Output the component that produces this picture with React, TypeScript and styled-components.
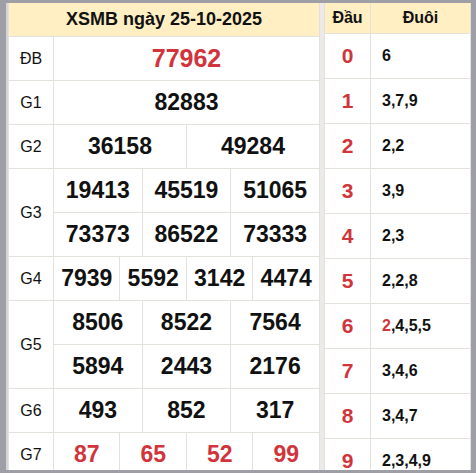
import styled, {createGlobalStyle} from 'styled-components'

const GlobalStyle = createGlobalStyle`
  html, body {
    margin: 0;
    padding: 0;
    background: #a1a1a9;
    font-family: "Liberation Sans", Arial, sans-serif;
  }
`

const RED = '#d1343a'
const LINE = '#e4e0db'
const HEAD_BG = '#ffefc3'

const Frame = styled.div`
  width: 476px;
  height: 473px;
  box-sizing: border-box;
  border-style: solid;
  border-color: #9e9ea6;
  border-width: 3px 5px 3px 6px;
  overflow: hidden;
`

const Inner = styled.div`
  display: flex;
  align-items: flex-start;
  gap: 4px;
  height: 100%;
  border-left: 2px solid #d6d6da;
  background: #ebeae8;
  overflow: hidden;
`

const Table = styled.table<{$width?: number}>`
  border-collapse: collapse;
  table-layout: fixed;
  background: #fff;
  ${({$width}) => ($width ? `width: ${$width}px;` : 'flex: 1;')}
  flex-shrink: 0;
  td, th {
    border: 1px solid ${LINE};
    padding: 0;
    line-height: 1.1;
  }
`

const HeadCell = styled.th<{$size: number; $h: number}>`
  background: ${HEAD_BG};
  color: #111;
  font-size: ${({$size}) => $size}px;
  font-weight: bold;
  height: ${({$h}) => $h}px;
  text-align: center;
  vertical-align: middle;
  border-top: none !important;
`

const LabelCell = styled.td`
  font-size: 16px;
  color: #111;
  text-align: center;
  vertical-align: middle;
  height: 42px;
`

const NumCell = styled.td<{$red?: boolean; $big?: boolean}>`
  font-size: ${({$big}) => ($big ? 25 : 23)}px;
  font-weight: bold;
  color: ${({$red}) => ($red ? RED : '#111')};
  text-align: center;
  vertical-align: middle;
  height: 42px;
  padding-top: 1px !important;
`

const HeadNum = styled.td`
  font-size: 21px;
  font-weight: bold;
  color: ${RED};
  text-align: center;
  vertical-align: middle;
  height: 44px;
`

const TailCell = styled.td`
  font-size: 16px;
  font-weight: bold;
  color: #111;
  padding-left: 11px !important;
  vertical-align: middle;
  height: 44px;
`

const Red = styled.span`
  color: ${RED};
`

type Prize = {label: string; nums: string[]; perRow?: number; red?: boolean; big?: boolean}

const prizes: Prize[] = [
  {label: 'ĐB', nums: ['77962'], red: true, big: true},
  {label: 'G1', nums: ['82883']},
  {label: 'G2', nums: ['36158', '49284']},
  {label: 'G3', nums: ['19413', '45519', '51065', '73373', '86522', '73333'], perRow: 3},
  {label: 'G4', nums: ['7939', '5592', '3142', '4474']},
  {label: 'G5', nums: ['8506', '8522', '7564', '5894', '2443', '2176'], perRow: 3},
  {label: 'G6', nums: ['493', '852', '317']},
  {label: 'G7', nums: ['87', '65', '52', '99'], red: true},
]

const tails = ['6', '3,7,9', '2,2', '3,9', '2,3', '2,2,8', '*', '3,4,6', '3,4,7', '2,3,4,9']

function PrizeRows({p}: {p: Prize}) {
  const per = p.perRow ?? p.nums.length
  const lines: string[][] = []
  for (let i = 0; i < p.nums.length; i += per) lines.push(p.nums.slice(i, i + per))
  return (
    <>
      {lines.map((line, li) => (
        <tr key={li}>
          {li === 0 && <LabelCell rowSpan={lines.length}>{p.label}</LabelCell>}
          {line.map((n) => (
            <NumCell key={n} colSpan={12 / per} $red={p.red} $big={p.big}>
              {n}
            </NumCell>
          ))}
        </tr>
      ))}
    </>
  )
}

export default function App() {
  return (
    <>
      <GlobalStyle />
      <Frame>
        <Inner>
          <Table $width={312}>
            <colgroup>
              <col style={{width: 45}} />
              {Array.from({length: 12}).map((_, i) => (
                <col key={i} />
              ))}
            </colgroup>
            <thead>
              <tr>
                <HeadCell colSpan={13} $size={18} $h={33}>XSMB ngày 25-10-2025</HeadCell>
              </tr>
            </thead>
            <tbody>
              {prizes.map((p) => (
                <PrizeRows key={p.label} p={p} />
              ))}
            </tbody>
          </Table>
          <Table>
            <colgroup>
              <col style={{width: 46}} />
              <col />
            </colgroup>
            <thead>
              <tr>
                <HeadCell $size={16} $h={30}>Đầu</HeadCell>
                <HeadCell $size={16} $h={30}>Đuôi</HeadCell>
              </tr>
            </thead>
            <tbody>
              {tails.map((t, i) => (
                <tr key={i}>
                  <HeadNum>{i}</HeadNum>
                  <TailCell>
                    {t === '*' ? (
                      <>
                        <Red>2</Red>,4,5,5
                      </>
                    ) : (
                      t
                    )}
                  </TailCell>
                </tr>
              ))}
            </tbody>
          </Table>
        </Inner>
      </Frame>
    </>
  )
}
